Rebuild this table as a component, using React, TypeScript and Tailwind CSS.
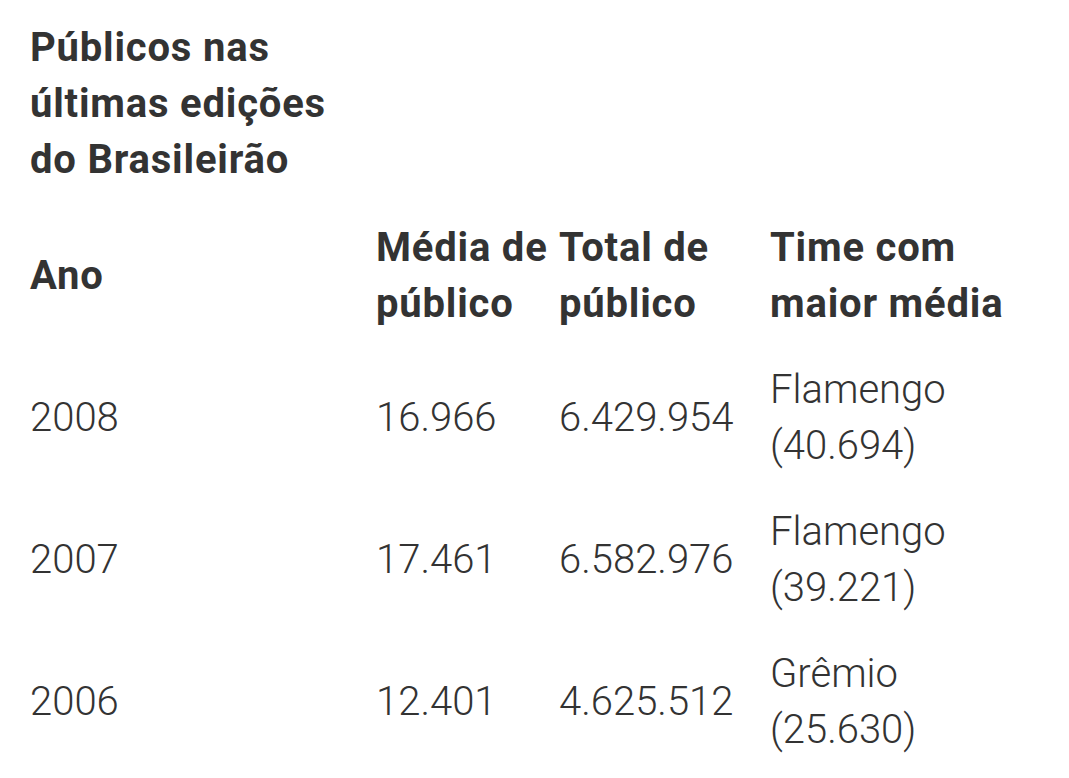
import React from 'react';

type Row = {
  year: string;
  avg: string;
  total: string;
  team: string;
  teamAvg: string;
};

const rows: Row[] = [
  { year: '2008', avg: '16.966', total: '6.429.954', team: 'Flamengo', teamAvg: '(40.694)' },
  { year: '2007', avg: '17.461', total: '6.582.976', team: 'Flamengo', teamAvg: '(39.221)' },
  { year: '2006', avg: '12.401', total: '4.625.512', team: 'Grêmio', teamAvg: '(25.630)' },
];

const cols = 'grid grid-cols-[346px_183px_211px_1fr] items-center';

const App: React.FC = () => {
  return (
    <div className="min-h-screen bg-white px-[30px] pt-[20px] text-[#333333] font-['Roboto','Noto_Sans',sans-serif] text-[40px] leading-[56px]">
      {/* Title */}
      <h2 className="font-bold tracking-[0.02em]">
        Públicos nas
        <br />
        últimas edições
        <br />
        do Brasileirão
      </h2>

      {/* Table */}
      <div className="mt-[17px]">
        <div className={`${cols} py-[15px] font-bold tracking-[0.02em]`}>
          <div>Ano</div>
          <div className="whitespace-nowrap">
            Média de
            <br />
            público
          </div>
          <div className="whitespace-nowrap">
            Total de
            <br />
            público
          </div>
          <div className="whitespace-nowrap">
            Time com
            <br />
            maior média
          </div>
        </div>

        {rows.map((r) => (
          <div key={r.year} className={`${cols} py-[15px] font-light`}>
            <div>{r.year}</div>
            <div>{r.avg}</div>
            <div className="whitespace-nowrap">{r.total}</div>
            <div>
              {r.team}
              <br />
              {r.teamAvg}
            </div>
          </div>
        ))}
      </div>
    </div>
  );
};

export default App;
